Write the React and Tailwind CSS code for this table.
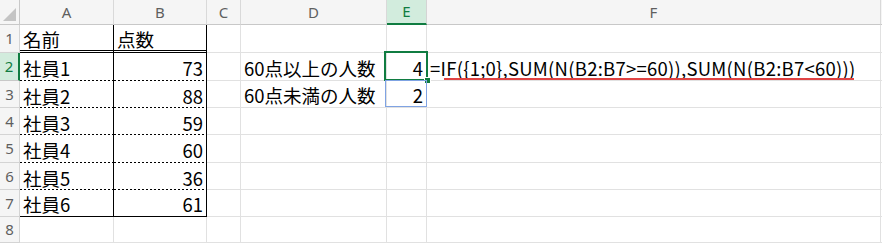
import React from 'react';

const COLS = ['A', 'B', 'C', 'D', 'E', 'F'];

const data = [
  ['社員1', '73'],
  ['社員2', '88'],
  ['社員3', '59'],
  ['社員4', '60'],
  ['社員5', '36'],
  ['社員6', '61'],
];

const grid = 'border-r border-b border-[#e1e1e1]';
// Excel's dotted border: 2px dash, 2px gap
const dotted = 'bg-[image:linear-gradient(90deg,#000_50%,transparent_50%)] bg-[length:4px_1px] bg-bottom-left bg-repeat-x';
const cellText = "font-['Noto_Sans_CJK_JP',sans-serif] text-[18.5px] text-black leading-none whitespace-nowrap";

function RowHead({ n, active }) {
  return (
    <div
      className={`flex items-center justify-center text-[15px] font-['Noto_Sans',sans-serif] ${
        active
          ? 'bg-[#d2ecdd] text-[#107c41] border-r-2 border-r-[#107c41] border-b border-b-[#c8c8c8]'
          : 'bg-[#f5f5f5] text-[#5f5f5f] border-r border-b border-[#d4d4d4]'
      }`}
    >
      {n}
    </div>
  );
}

function Cell({ children, right, className = '', textClass = '' }) {
  return (
    <div className={`flex items-center px-[3px] pt-[3px] ${right ? 'justify-end' : ''} ${className}`}>
      <span className={`${cellText} ${textClass}`}>{children}</span>
    </div>
  );
}

export default function App() {
  const rows = [];

  // row 1
  rows.push(
    <React.Fragment key="r1">
      <RowHead n={1} />
      <Cell className="border-r border-r-black border-b-[3px] border-double border-b-black">名前</Cell>
      <Cell className="border-r border-r-black border-b-[3px] border-double border-b-black">点数</Cell>
      <div className={grid} />
      <div className={grid} />
      <div className={grid} />
      <div className={grid} />
      <div className="border-b border-[#e1e1e1]" />
    </React.Fragment>
  );

  data.forEach(([name, score], i) => {
    const n = i + 2;
    const last = n === 7;
    const tableCell = last
      ? 'border-r border-r-black border-b border-b-black'
      : `border-r border-r-black ${dotted}`;
    let d = null;
    let e = null;
    let f = null;
    if (n === 2) {
      d = '60点以上の人数';
      e = '4';
      f = '=IF({1;0},SUM(N(B2:B7>=60)),SUM(N(B2:B7<60)))';
    }
    if (n === 3) {
      d = '60点未満の人数';
      e = '2';
    }
    rows.push(
      <React.Fragment key={n}>
        <RowHead n={n} active={n === 2} />
        <Cell className={tableCell}>{name}</Cell>
        <Cell right className={tableCell}>{score}</Cell>
        <div className={grid} />
        {d ? <Cell className={grid}>{d}</Cell> : <div className={grid} />}
        {e ? <Cell right className={grid}>{e}</Cell> : <div className={grid} />}
        {f ? (
          <Cell className={`${grid} overflow-visible`} textClass="tracking-[0.25px]">{f}</Cell>
        ) : (
          <div className={grid} />
        )}
        <div className="border-b border-[#e1e1e1]" />
      </React.Fragment>
    );
  });

  // row 8
  rows.push(
    <React.Fragment key="r8">
      <RowHead n={8} />
      <div className={grid} />
      <div className={grid} />
      <div className={grid} />
      <div className={grid} />
      <div className={grid} />
      <div className={grid} />
      <div className="border-b border-[#e1e1e1]" />
    </React.Fragment>
  );

  return (
    <div className="relative w-[882px] h-[243px] overflow-hidden bg-white">
      <div className="grid grid-cols-[20px_94px_93px_34px_146px_40px_454px_1fr] grid-rows-[25px_28px_28px_27px_27px_28px_27px_27px_26px]">
        {/* corner */}
        <div className="relative bg-[#f5f5f5] border-r border-b border-[#c8c8c8]">
          <div className="absolute right-[3px] bottom-[3px] w-0 h-0 border-l-[13px] border-l-transparent border-b-[13px] border-b-[#c4c4c4]" />
        </div>
        {COLS.map((c) => (
          <div
            key={c}
            className={`flex items-center justify-center text-[15px] font-['Noto_Sans',sans-serif] ${
              c === 'E'
                ? 'bg-[#d2ecdd] text-[#107c41] border-r border-r-[#d4d4d4] border-b-2 border-b-[#107c41]'
                : 'bg-[#f5f5f5] text-[#5f5f5f] border-r border-r-[#d9d9d9] border-b border-b-[#c8c8c8]'
            }`}
          >
            {c}
          </div>
        ))}
        <div className="bg-[#f5f5f5] border-b border-[#c8c8c8]" />
        {rows}
      </div>

      {/* active cell E2 */}
      <div className="absolute left-[384px] top-[51px] w-[44px] h-[30px] border-2 border-[#107c41]" />
      <div className="absolute left-[424px] top-[77px] w-[7px] h-[7px] bg-[#107c41] border border-white" />
      {/* E3 reference highlight */}
      <div className="absolute left-[385px] top-[80px] w-[42px] h-[27px] border-[1.5px] border-[#7fa3e3]" />
      {/* red underline */}
      <div className="absolute left-[444px] top-[78px] w-[410px] h-[2px] bg-[#e04343]" />
    </div>
  );
}
